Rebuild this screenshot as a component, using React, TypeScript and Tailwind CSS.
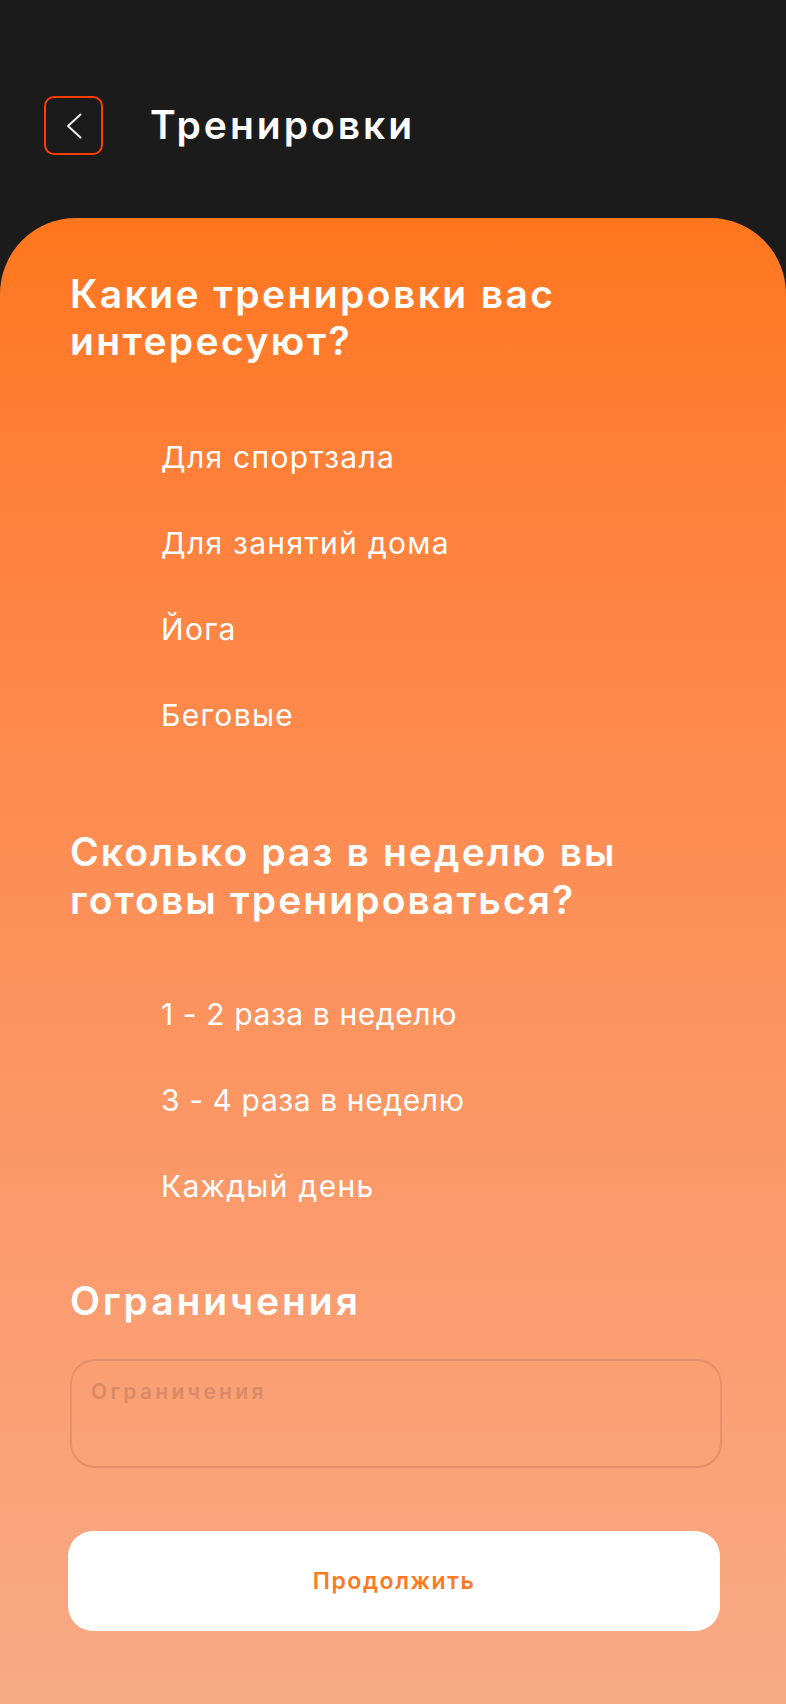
import React, { useState } from 'react';

const trainings = ['Для спортзала', 'Для занятий дома', 'Йога', 'Беговые'];
const frequencies = ['1 - 2 раза в неделю', '3 - 4 раза в неделю', 'Каждый день'];

interface OptionProps {
  label: string;
  checked: boolean;
  onToggle: () => void;
}

function Option({ label, checked, onToggle }: OptionProps) {
  const hasDigits = /\d/.test(label);
  return (
    <label className="flex h-[86px] items-center cursor-pointer">
      <input
        type="checkbox"
        checked={checked}
        onChange={onToggle}
        className="w-[91px] shrink-0 opacity-0"
      />
      <span
        className={
          hasDigits
            ? 'text-[30px] leading-[36px] tracking-[0.6px] text-white'
            : 'text-[30px] leading-[36px] tracking-[1.3px] text-white'
        }
      >
        {label}
      </span>
    </label>
  );
}

export default function App() {
  const [selected, setSelected] = useState<string[]>([]);
  const [limits, setLimits] = useState('');

  const toggle = (value: string) =>
    setSelected((prev) =>
      prev.includes(value) ? prev.filter((v) => v !== value) : [...prev, value],
    );

  return (
    <div
      className="min-h-[1704px] bg-[#1b1b1b] flex flex-col"
      style={{ fontFamily: 'Inter, "Noto Sans", sans-serif' }}
    >
      <header className="flex items-center gap-[47px] pl-[44px] pt-[96px]">
        <button
          type="button"
          className="flex h-[59px] w-[59px] items-center justify-center rounded-[10px] border-2 border-[#ff3d00]"
        >
          <svg width="16" height="26" viewBox="0 0 16 26" fill="none">
            <path
              d="M14.5 1.5L2 13L14.5 24.5"
              stroke="#eeeeee"
              strokeWidth="2"
              strokeLinecap="round"
              strokeLinejoin="round"
            />
          </svg>
        </button>
        <h1 className="text-[39px] font-semibold tracking-[3px] text-white">Тренировки</h1>
      </header>

      <main className="mt-[63px] flex-1 rounded-t-[76px] bg-gradient-to-b from-[#ff761c] to-[#f8aa86] pl-[70px] pr-[64px] pt-[52px] pb-[72px]">
        <h2 className="text-[39px] leading-[47px] font-semibold tracking-[2.4px] text-white">
          Какие тренировки вас
          <br />
          интересуют?
        </h2>
        <div className="mt-[50px] flex flex-col">
          {trainings.map((t) => (
            <Option key={t} label={t} checked={selected.includes(t)} onToggle={() => toggle(t)} />
          ))}
        </div>

        <h2 className="mt-[70px] text-[39px] leading-[48px] font-semibold tracking-[2.1px] text-white">
          Сколько раз в неделю вы
          <br />
          готовы тренироваться?
        </h2>
        <div className="mt-[47px] flex flex-col">
          {frequencies.map((f) => (
            <Option key={f} label={f} checked={selected.includes(f)} onToggle={() => toggle(f)} />
          ))}
        </div>

        <h2 className="mt-[48px] text-[39px] leading-[47px] font-semibold tracking-[2.9px] text-white">
          Ограничения
        </h2>
        <textarea
          value={limits}
          onChange={(e) => setLimits(e.target.value)}
          placeholder="Ограничения"
          className="mt-[35px] block h-[109px] w-full resize-none rounded-[25px] border-2 border-[#e5906a] bg-transparent px-[19px] pt-[18px] text-[21px] leading-[26px] font-semibold tracking-[3.3px] text-white placeholder:text-[#d98a67] outline-none"
        />

        <button
          type="button"
          className="-ml-[2px] mt-[63px] flex h-[100px] w-[652px] items-center justify-center rounded-[25px] bg-white text-[23px] font-semibold tracking-[1.6px] text-[#ff7a1f]"
        >
          Продолжить
        </button>
      </main>
    </div>
  );
}
